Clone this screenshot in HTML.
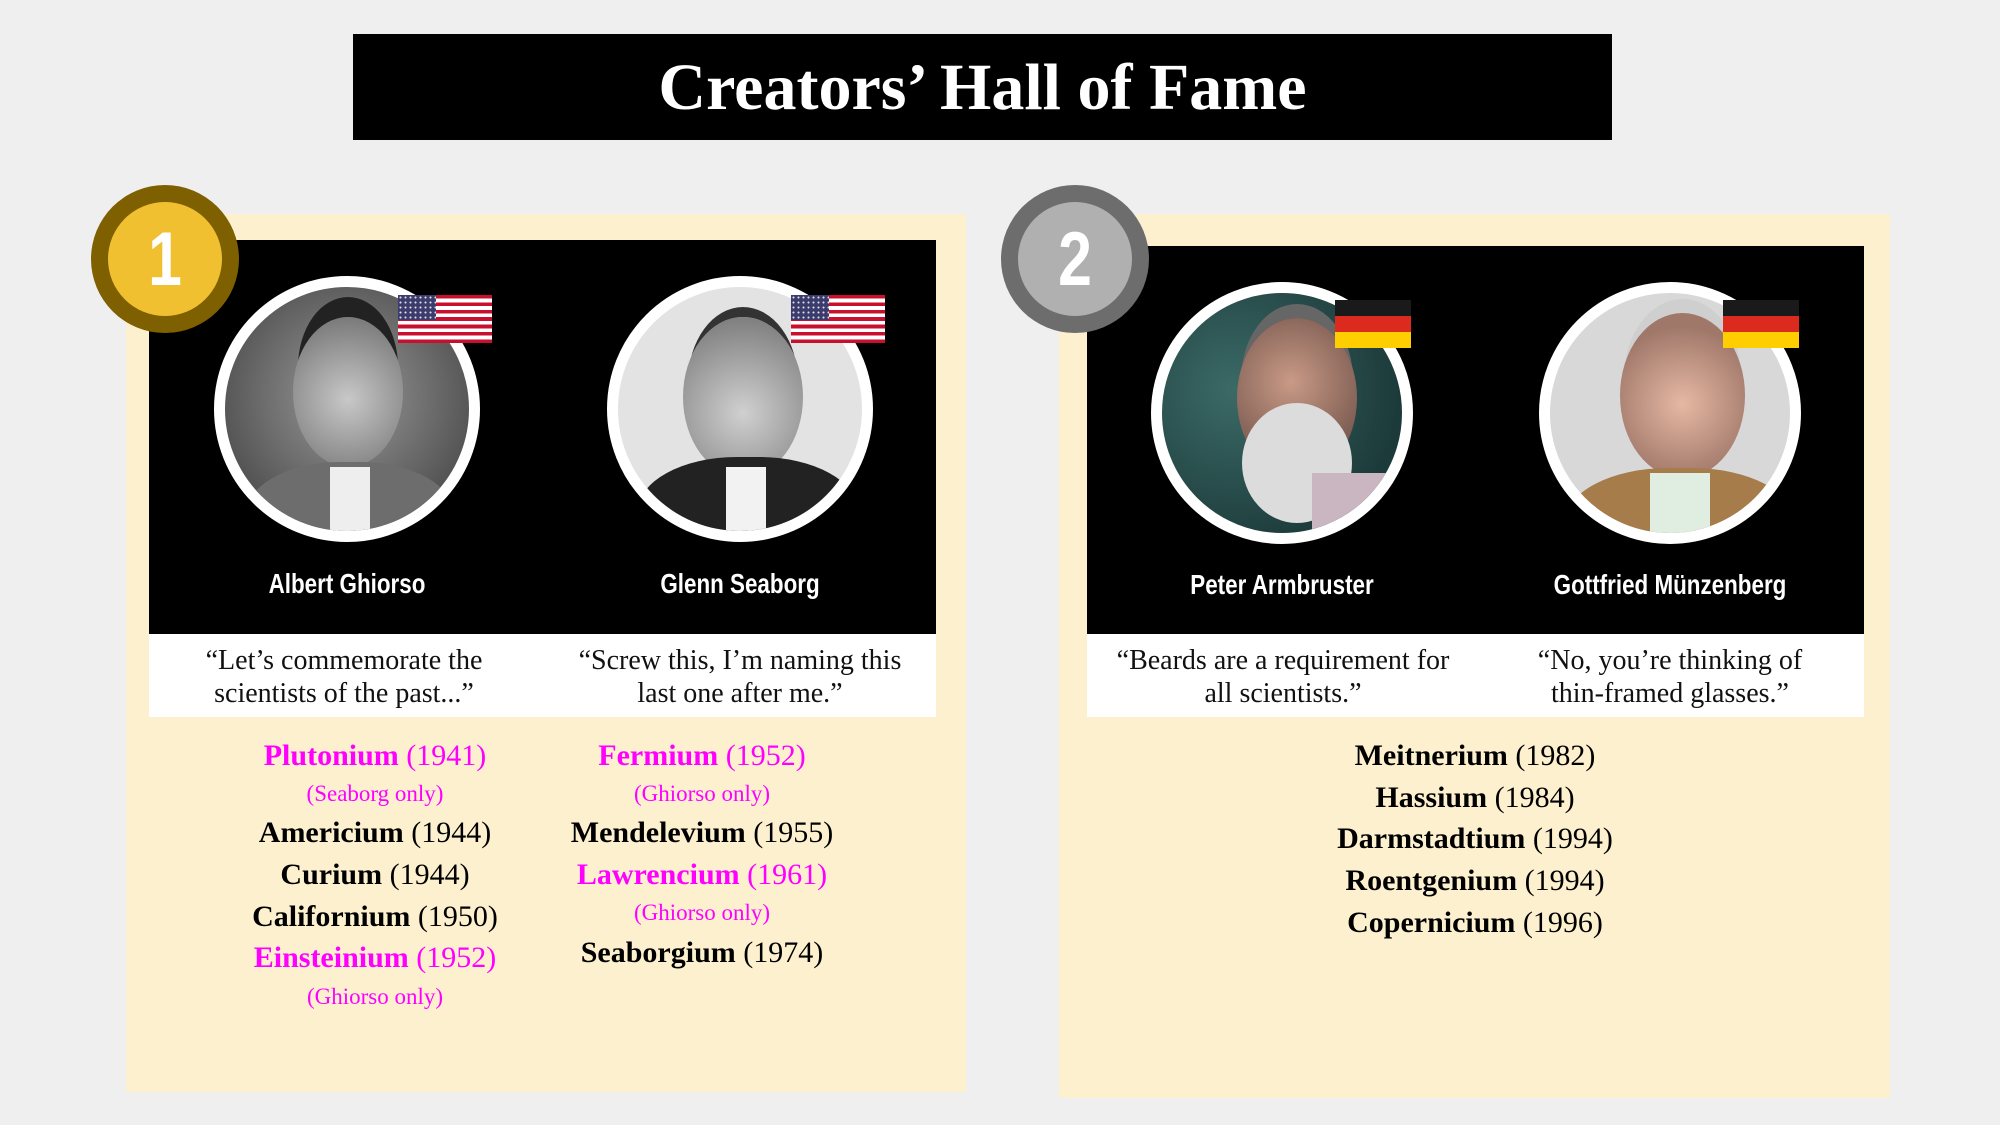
<!DOCTYPE html>
<html><head><meta charset="utf-8"><style>
*{margin:0;padding:0;box-sizing:border-box}
body{width:2000px;height:1125px;background:#efefef;position:relative;overflow:hidden;font-family:"Liberation Serif",serif}
.a{position:absolute}
.t{position:absolute;text-align:center;white-space:nowrap;line-height:1}
.el{font-size:30px;color:#000}
.el b{font-weight:bold}
.m{color:#f0f}
.n{font-size:23px;color:#f0f}
.q{font-size:28px;color:#111;line-height:33px}
.nm{font-family:"Liberation Sans Narrow","Liberation Sans",sans-serif;font-weight:bold;color:#fff;font-size:28px;transform:scaleX(0.8)}
.ph{position:absolute;border-radius:50%;border:11px solid #fff;overflow:hidden}
.us{position:absolute;background:repeating-linear-gradient(#c8102e 0 3.7px,#fff 3.7px 7.4px)}
.us i{position:absolute;left:0;top:0;width:40%;height:53%;background:#3c3b6e radial-gradient(#ddd 0.8px,transparent 1.2px) 0 0/5px 5px}
.de{position:absolute;background:linear-gradient(#1a1a1a 0 33.3%,#dd2a1f 33.3% 66.6%,#ffce00 66.6%)}
.num{font-family:'Liberation Sans',sans-serif;font-weight:bold;font-size:76px;color:#fff;transform:scaleX(0.8)}
</style></head><body>
<div class="a" style="left:353px;top:34px;width:1259px;height:106px;background:#000"></div>
<div class="t" style="left:353px;top:55px;width:1259px;font-size:66px;font-weight:bold;color:#fff">Creators’ Hall of Fame</div>

<!-- card 1 -->
<div class="a" style="left:126px;top:214px;width:840px;height:878px;background:#fdf0cf"></div>
<div class="a" style="left:149px;top:240px;width:787px;height:394px;background:#000"></div>
<div class="a" style="left:149px;top:634px;width:787px;height:83px;background:#fff"></div>

<div class="ph" style="left:214px;top:276px;width:266px;height:266px;background:radial-gradient(circle at 50% 45%,#9a9a9a,#555 70%)">
  <div class="a" style="left:68px;top:30px;width:110px;height:150px;border-radius:50%;background:radial-gradient(circle at 50% 55%,#c8c8c8,#6a6a6a);box-shadow:0 -25px 0 -5px #222"></div>
  <div class="a" style="left:20px;top:175px;width:210px;height:120px;border-radius:45%;background:#6d6d6d"></div>
  <div class="a" style="left:105px;top:180px;width:40px;height:80px;background:#eee"></div>
</div>
<div class="ph" style="left:607px;top:276px;width:266px;height:266px;background:#e3e3e3">
  <div class="a" style="left:65px;top:30px;width:120px;height:160px;border-radius:50%;background:radial-gradient(circle at 50% 60%,#d0d0d0,#707070);box-shadow:0 -15px 0 -5px #333"></div>
  <div class="a" style="left:20px;top:170px;width:220px;height:120px;border-radius:45%;background:#222"></div>
  <div class="a" style="left:108px;top:180px;width:40px;height:80px;background:#f2f2f2"></div>
</div>
<div class="us" style="left:398px;top:295px;width:94px;height:48px"><i></i></div>
<div class="us" style="left:791px;top:295px;width:94px;height:48px"><i></i></div>
<div class="t nm" style="left:222px;top:570px;width:250px">Albert Ghiorso</div>
<div class="t nm" style="left:615px;top:570px;width:250px">Glenn Seaborg</div>
<div class="t q" style="left:169px;top:644px;width:350px">“Let’s commemorate the<br>scientists of the past...”</div>
<div class="t q" style="left:540px;top:644px;width:400px">“Screw this, I’m naming this<br>last one after me.”</div>

<div class="t el m" style="left:225px;top:741px;width:300px"><b>Plutonium</b> (1941)</div>
<div class="t n" style="left:225px;top:782px;width:300px">(Seaborg only)</div>
<div class="t el" style="left:225px;top:818px;width:300px"><b>Americium</b> (1944)</div>
<div class="t el" style="left:225px;top:860px;width:300px"><b>Curium</b> (1944)</div>
<div class="t el" style="left:225px;top:902px;width:300px"><b>Californium</b> (1950)</div>
<div class="t el m" style="left:225px;top:943px;width:300px"><b>Einsteinium</b> (1952)</div>
<div class="t n" style="left:225px;top:985px;width:300px">(Ghiorso only)</div>

<div class="t el m" style="left:552px;top:741px;width:300px"><b>Fermium</b> (1952)</div>
<div class="t n" style="left:552px;top:782px;width:300px">(Ghiorso only)</div>
<div class="t el" style="left:552px;top:818px;width:300px"><b>Mendelevium</b> (1955)</div>
<div class="t el m" style="left:552px;top:860px;width:300px"><b>Lawrencium</b> (1961)</div>
<div class="t n" style="left:552px;top:901px;width:300px">(Ghiorso only)</div>
<div class="t el" style="left:552px;top:938px;width:300px"><b>Seaborgium</b> (1974)</div>

<div class="a" style="left:91px;top:185px;width:148px;height:148px;border-radius:50%;background:#7f6000"></div>
<div class="a" style="left:108px;top:202px;width:114px;height:114px;border-radius:50%;background:#f0c030"></div>
<div class="t num" style="left:108px;top:222px;width:114px">1</div>

<!-- card 2 -->
<div class="a" style="left:1059px;top:214px;width:831px;height:884px;background:#fdf0cf"></div>
<div class="a" style="left:1087px;top:246px;width:777px;height:388px;background:#000"></div>
<div class="a" style="left:1087px;top:634px;width:777px;height:83px;background:#fff"></div>

<div class="ph" style="left:1151px;top:282px;width:262px;height:262px;background:radial-gradient(circle at 30% 40%,#3b6a66,#1c3a3a 75%)">
  <div class="a" style="left:75px;top:25px;width:120px;height:160px;border-radius:50%;background:radial-gradient(circle at 45% 40%,#c99a86,#7a5a50 70%);box-shadow:0 -18px 0 -4px #666"></div>
  <div class="a" style="left:80px;top:110px;width:110px;height:120px;border-radius:50%;background:#dcdcdc"></div>
  <div class="a" style="left:150px;top:180px;width:100px;height:90px;background:#c9b6c0"></div>
</div>
<div class="ph" style="left:1539px;top:282px;width:262px;height:262px;background:#d8d8d8">
  <div class="a" style="left:70px;top:20px;width:125px;height:165px;border-radius:50%;background:radial-gradient(circle at 50% 55%,#e6b8a3,#a0786a 70%);box-shadow:0 -18px 0 -4px #cfcfcf"></div>
  <div class="a" style="left:15px;top:175px;width:230px;height:120px;border-radius:45%;background:#a67c4a"></div>
  <div class="a" style="left:100px;top:180px;width:60px;height:80px;background:#dfeee0"></div>
</div>
<div class="de" style="left:1335px;top:300px;width:76px;height:48px"></div>
<div class="de" style="left:1723px;top:300px;width:76px;height:48px"></div>
<div class="t nm" style="left:1132px;top:571px;width:300px">Peter Armbruster</div>
<div class="t nm" style="left:1495px;top:571px;width:350px">Gottfried Münzenberg</div>
<div class="t q" style="left:1083px;top:644px;width:400px">“Beards are a requirement for<br>all scientists.”</div>
<div class="t q" style="left:1470px;top:644px;width:400px">“No, you’re thinking of<br>thin-framed glasses.”</div>

<div class="t el" style="left:1325px;top:741px;width:300px"><b>Meitnerium</b> (1982)</div>
<div class="t el" style="left:1325px;top:783px;width:300px"><b>Hassium</b> (1984)</div>
<div class="t el" style="left:1325px;top:824px;width:300px"><b>Darmstadtium</b> (1994)</div>
<div class="t el" style="left:1325px;top:866px;width:300px"><b>Roentgenium</b> (1994)</div>
<div class="t el" style="left:1325px;top:908px;width:300px"><b>Copernicium</b> (1996)</div>

<div class="a" style="left:1001px;top:185px;width:148px;height:148px;border-radius:50%;background:#6d6d6d"></div>
<div class="a" style="left:1018px;top:202px;width:114px;height:114px;border-radius:50%;background:#b0b0b0"></div>
<div class="t num" style="left:1018px;top:222px;width:114px">2</div>
</body></html>
